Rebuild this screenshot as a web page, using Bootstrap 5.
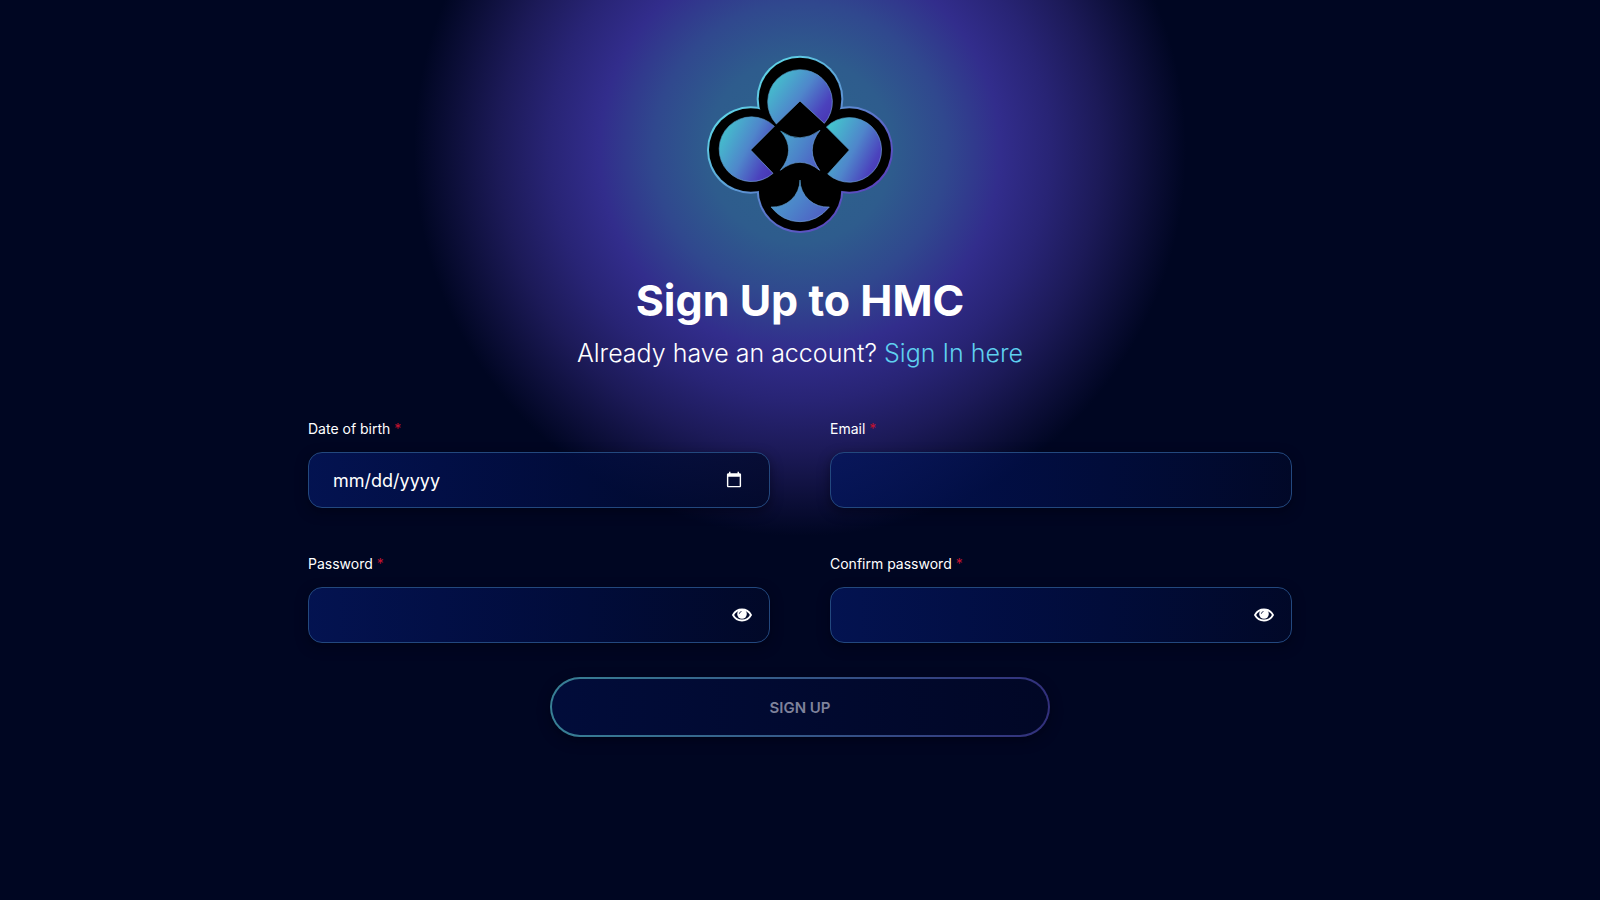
<!DOCTYPE html>
<html lang="en">
<head>
<meta charset="utf-8">
<meta name="viewport" content="width=device-width, initial-scale=1">
<title>Sign Up to HMC</title>
<link href="https://cdn.jsdelivr.net/npm/bootstrap@5.3.0/dist/css/bootstrap.min.css" rel="stylesheet">
<style>
  body {
    font-family: Inter, "Open Sans", sans-serif;
    color: #fff;
    background: #000622 radial-gradient(circle 386px at 50% 150px, #2d658c 0, #2e5c8d 24%, #30488e 38%, #322d8c 52%, #282475 65%, #1c1a58 78%, #0d0f3a 90%, #000622 100%) no-repeat;
  }
  .signup { max-width: 1008px; padding: 55px 12px 48px; }
  .logo { width: 188px; height: 178px; }
  .title { font-size: 43px; line-height: 52px; font-weight: 700; margin-top: 41px; }
  .subtitle { font-size: 25px; line-height: 32px; font-weight: 300; margin: 11px 0 50px; }
  .subtitle a { color: #5fd0f0; }
  .fields { --bs-gutter-x: 60px; --bs-gutter-y: 46px; }
  .form-label { font-size: 14px; line-height: 20px; margin-bottom: 13px; display: block; }
  .req { color: #c4122f; }
  .field-box {
    height: 56px;
    padding: 0 24px;
    font-size: 18px;
    color: #fff;
    color-scheme: dark;
    border: 1px solid #23487e;
    border-radius: 14px;
    background: linear-gradient(90deg, rgba(4, 22, 92, .8), rgba(2, 16, 76, .75) 40%, rgba(1, 13, 60, .75) 70%, rgba(1, 9, 42, .75));
    box-shadow: 0 4px 12px rgba(0, 2, 16, .5);
  }
  .field-box:focus { color: #fff; background-color: transparent; border-color: #4fb6d6; }
  .eye { right: 18px; line-height: 0; }
  .btn-signup {
    width: 500px;
    max-width: 100%;
    height: 60px;
    margin-top: 34px;
    padding-top: 8px;
    font-size: 15px;
    font-weight: 600;
    border: 2px solid transparent;
    border-radius: 30px;
    background: linear-gradient(90deg, #010c3a, #010726) padding-box, linear-gradient(90deg, #388095, #32307c) border-box;
    box-shadow: 0 4px 12px rgba(0, 2, 16, .5);
  }
  .btn-signup, .btn-signup:hover { color: #7f829b; }
</style>
</head>
<body class="min-vh-100">
<main class="signup container text-center">
  <svg class="logo d-block mx-auto" viewBox="48 42 564 534" role="img" aria-label="HMC">
    <defs>
      <linearGradient id="fill" x1="0" y1=".2" x2="1" y2=".8">
        <stop offset="0" stop-color="#43c6cd"/><stop offset=".5" stop-color="#4f86cb"/><stop offset=".85" stop-color="#4b42bd"/><stop offset="1" stop-color="#4937b5"/>
      </linearGradient>
      <linearGradient id="soft" x1="0" y1=".2" x2="1" y2=".8">
        <stop offset="0" stop-color="#4ba4cb"/><stop offset=".5" stop-color="#4c83c9"/><stop offset="1" stop-color="#4f5cc4"/>
      </linearGradient>
      <linearGradient id="rim" gradientUnits="userSpaceOnUse" x1="130" y1="110" x2="500" y2="500">
        <stop offset="0" stop-color="#5fe3ea"/><stop offset="1" stop-color="#5a43bd"/>
      </linearGradient>
      <linearGradient id="edge" x1="0" y1="0" x2="1" y2="1">
        <stop offset="0" stop-color="#3c8bb0"/><stop offset="1" stop-color="#83a8ea"/>
      </linearGradient>
    </defs>
    <g fill="url(#rim)">
      <circle cx="330" cy="174" r="130"/><circle cx="182" cy="327" r="131"/>
      <circle cx="478" cy="327" r="131"/><circle cx="330" cy="446" r="130"/>
    </g>
    <g>
      <circle cx="330" cy="174" r="124"/><circle cx="182" cy="327" r="125"/>
      <circle cx="478" cy="327" r="125"/><circle cx="330" cy="446" r="124"/>
      <path d="M210 210h240v240H210z"/>
    </g>
    <g fill="url(#fill)" stroke="url(#edge)" stroke-width="2">
      <path d="M330 180L259 249A97 97 0 1 1 403 247Z"/>
      <path d="M182 327L253 256A97 97 0 1 0 249 397Z"/>
      <path d="M478 327L409 258A97 97 0 1 1 413 399Z"/>
      <path fill="url(#soft)" d="M272 270Q330 312 390 268Q344 327 389 388Q330 340 271 388Q320 327 272 270Z"/>
      <path fill="url(#soft)" d="M330 417A82 82 0 0 1 243 498Q278 542 330 542T418 498A82 82 0 0 1 330 417Z"/>
    </g>
  </svg>
  <h1 class="title mb-0">Sign Up to HMC</h1>
  <p class="subtitle">Already have an account? <a class="text-decoration-none" href="#">Sign In here</a></p>
  <form>
    <div class="row row-cols-1 row-cols-md-2 fields text-start">
      <div class="col">
        <label class="form-label" for="dob">Date of birth <span class="req">*</span></label>
        <input class="form-control field-box" type="date" id="dob">
      </div>
      <div class="col">
        <label class="form-label" for="email">Email <span class="req">*</span></label>
        <input class="form-control field-box" type="email" id="email">
      </div>
      <div class="col">
        <label class="form-label" for="password">Password <span class="req">*</span></label>
        <div class="position-relative">
          <input class="form-control field-box" type="password" id="password">
          <button class="eye btn border-0 p-0 position-absolute top-50 translate-middle-y" type="button" aria-label="Show password">
            <svg width="20" height="14" viewBox="0 0 20 14"><path d="M1 7Q4 1.500 10 1.500T19 7Q16 12.500 10 12.500T1 7Z" fill="none" stroke="#fff" stroke-width="1.800"/><circle cx="10" cy="6" r="4.800" fill="#fff"/><path d="M7.300 5.800Q7.500 3.800 9.500 3.500" fill="none" stroke="#020c34" stroke-width=".8"/></svg>
          </button>
        </div>
      </div>
      <div class="col">
        <label class="form-label" for="confirm">Confirm password <span class="req">*</span></label>
        <div class="position-relative">
          <input class="form-control field-box" type="password" id="confirm">
          <button class="eye btn border-0 p-0 position-absolute top-50 translate-middle-y" type="button" aria-label="Show password confirmation">
            <svg width="20" height="14" viewBox="0 0 20 14"><path d="M1 7Q4 1.500 10 1.500T19 7Q16 12.500 10 12.500T1 7Z" fill="none" stroke="#fff" stroke-width="1.800"/><circle cx="10" cy="6" r="4.800" fill="#fff"/><path d="M7.300 5.800Q7.500 3.800 9.500 3.500" fill="none" stroke="#020c34" stroke-width=".8"/></svg>
          </button>
        </div>
      </div>
    </div>
    <button class="btn btn-signup" type="submit">SIGN UP</button>
  </form>
</main>
<script src="https://cdn.jsdelivr.net/npm/bootstrap@5.3.0/dist/js/bootstrap.bundle.min.js"></script>
</body>
</html>
